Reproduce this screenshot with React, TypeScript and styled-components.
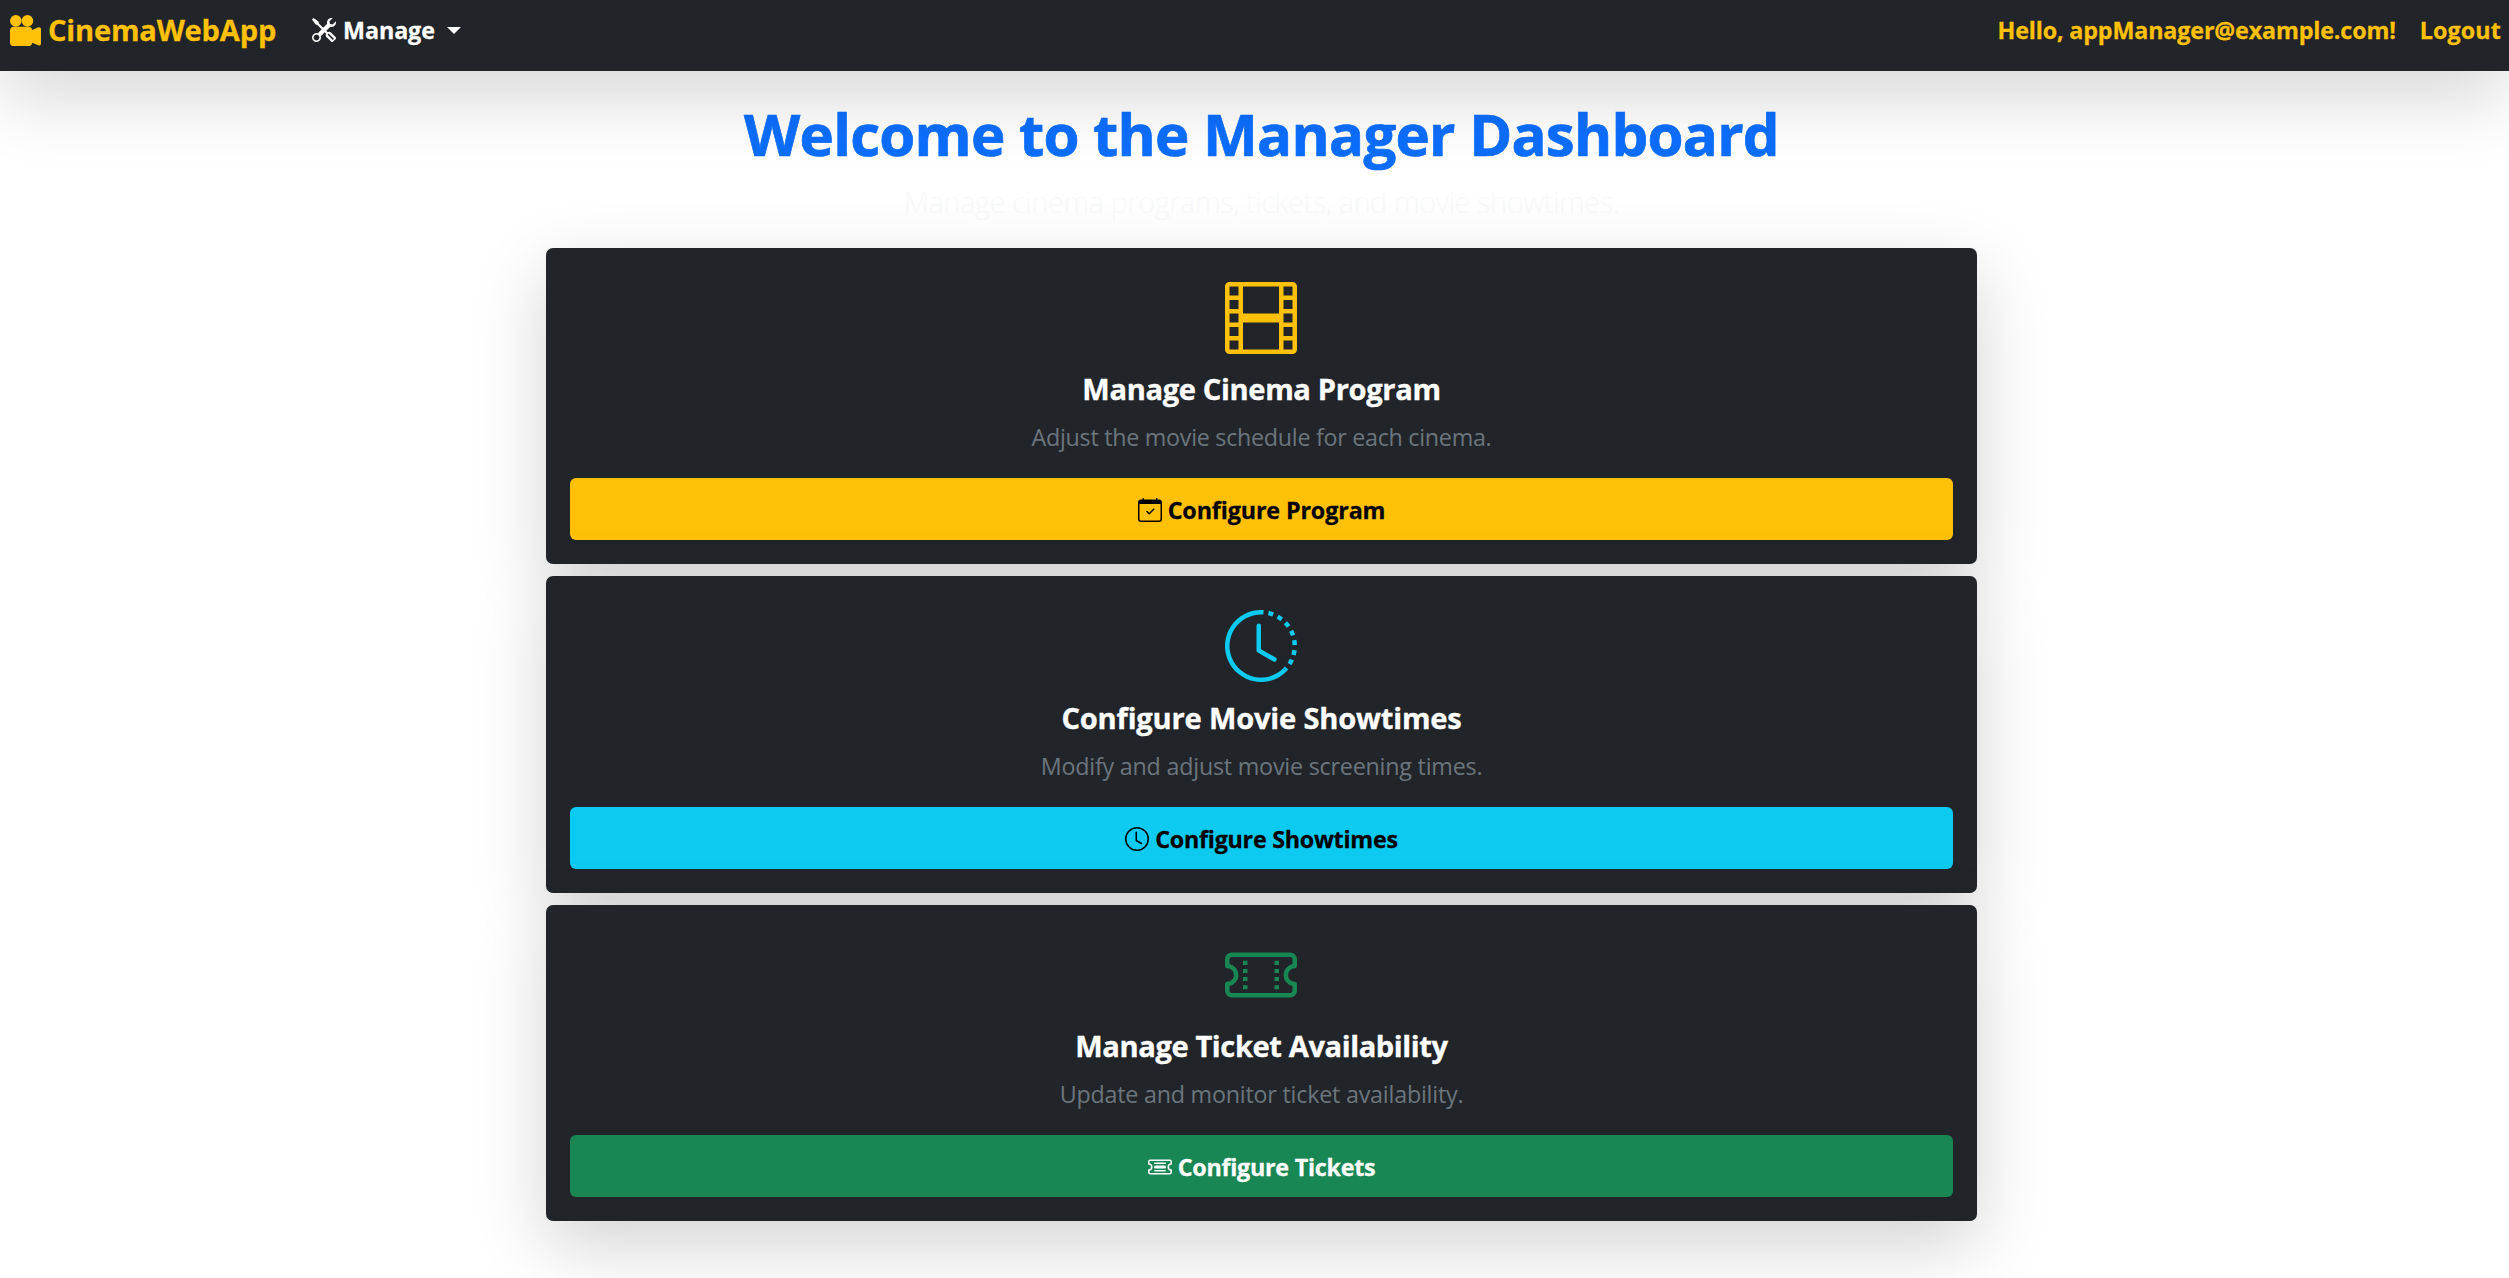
import React from "react";
import styled, { createGlobalStyle } from "styled-components";
import {
  BsCalendarCheck,
  BsCameraReelsFill,
  BsClock,
  BsClockHistory,
  BsFilm,
  BsTicketDetailed,
  BsTicketPerforated,
  BsTools,
} from "react-icons/bs";

const GlobalStyle = createGlobalStyle`
  *, *::before, *::after { box-sizing: border-box; }
  body {
    margin: 0;
    background: #fff;
    color: #212529;
    font-family: "Segoe UI", "Open Sans", "Noto Sans", sans-serif;
    font-size: 23.3px;
    line-height: 36px;
  }
  h1, h2, p { margin: 0; }
`;

const Navbar = styled.nav`
  position: relative;
  z-index: 1;
  display: flex;
  align-items: center;
  height: 71px;
  padding: 0 8px 11px 10px;
  background: #212529;
  box-shadow: 0 24px 72px rgba(0, 0, 0, 0.175);
  font-weight: 700;
  -webkit-text-stroke: 0.012em;
  white-space: nowrap;
`;

const Brand = styled.a`
  display: flex;
  align-items: center;
  gap: 7px;
  color: #ffc107;
  font-size: 29.1px;
  line-height: 45px;
  letter-spacing: -0.2px;
`;

const Dropdown = styled.a`
  display: flex;
  align-items: center;
  margin-left: 36px;
  color: #fff;
  letter-spacing: -0.1px;
`;

const Caret = styled.span`
  margin-left: 12px;
  border-top: 7px solid currentColor;
  border-right: 7px solid transparent;
  border-left: 7px solid transparent;
`;

const Account = styled.div`
  display: flex;
  gap: 24px;
  margin-left: auto;
  color: #ffc107;
`;

const AccountLink = styled.a<{ $track: number }>`
  letter-spacing: ${(p) => p.$track}px;
`;

const Glyph = styled.span<{ $size: number; $gap?: number }>`
  display: flex;
  flex: none;
  margin-right: ${(p) => p.$gap ?? 0}px;
  font-size: ${(p) => p.$size}px;
`;

const Page = styled.main`
  display: flex;
  flex-direction: column;
  align-items: center;
  height: 1207px;
  padding: 27px 0 0 14px;
  overflow: hidden;
  text-align: center;
`;

const Title = styled.h1`
  color: #0d6efd;
  font-size: 58.2px;
  font-weight: 700;
  line-height: 72px;
  letter-spacing: -0.76px;
  -webkit-text-stroke: 0.012em;
`;

const Lead = styled.p`
  margin-top: 9.55px;
  color: #f8f9fa;
  font-size: 29.1px;
  font-weight: 300;
  line-height: 45px;
  letter-spacing: -0.52px;
`;

const CardList = styled.section`
  display: flex;
  flex-direction: column;
  gap: 12px;
  width: 1431px;
  margin-top: 23.2px;
`;

const Card = styled.article`
  position: relative;
  display: flex;
  flex-direction: column;
  align-items: center;
  height: 316.45px;
  padding: 34px 24px 24px;
  border-radius: 7px;
  background: #212529;
  box-shadow: 0 24px 72px rgba(0, 0, 0, 0.175);
`;

const CardIcon = styled.div<{ $color: string }>`
  display: flex;
  margin-right: 1px;
  color: ${(p) => p.$color};
  font-size: 72px;
`;

const CardTitle = styled.h2<{ $track: number }>`
  margin-top: 17.4px;
  color: #fff;
  font-size: 29.1px;
  font-weight: 700;
  line-height: 36px;
  letter-spacing: ${(p) => p.$track}px;
  -webkit-text-stroke: 0.012em;
`;

const CardText = styled.p<{ $track: number }>`
  margin-top: 12px;
  color: #6c757d;
  letter-spacing: ${(p) => p.$track}px;
`;

const Button = styled.a<{ $bg: string; $fg: string; $track: number }>`
  display: flex;
  align-items: center;
  justify-content: center;
  align-self: stretch;
  height: 62px;
  margin-top: auto;
  padding-top: 2px;
  border-radius: 6px;
  background: ${(p) => p.$bg};
  color: ${(p) => p.$fg};
  font-weight: 700;
  letter-spacing: ${(p) => p.$track}px;
  -webkit-text-stroke: 0.012em;
`;

const cards = [
  {
    title: "Manage Cinema Program",
    titleTrack: -0.345,
    text: "Adjust the movie schedule for each cinema.",
    textTrack: -0.283,
    action: "Configure Program",
    actionTrack: -0.13,
    color: "#ffc107",
    fg: "#000",
    Icon: BsFilm,
    ActionIcon: BsCalendarCheck,
  },
  {
    title: "Configure Movie Showtimes",
    titleTrack: -0.185,
    text: "Modify and adjust movie screening times.",
    textTrack: -0.22,
    action: "Configure Showtimes",
    actionTrack: -0.27,
    color: "#0dcaf0",
    fg: "#000",
    Icon: BsClockHistory,
    ActionIcon: BsClock,
  },
  {
    title: "Manage Ticket Availability",
    titleTrack: -0.4,
    text: "Update and monitor ticket availability.",
    textTrack: -0.22,
    action: "Configure Tickets",
    actionTrack: -0.26,
    color: "#198754",
    fg: "#fff",
    Icon: BsTicketPerforated,
    ActionIcon: BsTicketDetailed,
  },
];

export default function App() {
  return (
    <>
      <GlobalStyle />
      <Navbar>
        <Brand>
          <Glyph $size={31}>
            <BsCameraReelsFill />
          </Glyph>
          CinemaWebApp
        </Brand>
        <Dropdown>
          <Glyph $size={24} $gap={7}>
            <BsTools />
          </Glyph>
          Manage
          <Caret />
        </Dropdown>
        <Account>
          <AccountLink $track={-0.15}>Hello, appManager@example.com!</AccountLink>
          <AccountLink $track={0.12}>Logout</AccountLink>
        </Account>
      </Navbar>
      <Page>
        <Title>Welcome to the Manager Dashboard</Title>
        <Lead>Manage cinema programs, tickets, and movie showtimes.</Lead>
        <CardList>
          {cards.map(({ Icon, ActionIcon, ...card }) => (
            <Card key={card.title}>
              <CardIcon $color={card.color}>
                <Icon />
              </CardIcon>
              <CardTitle $track={card.titleTrack}>{card.title}</CardTitle>
              <CardText $track={card.textTrack}>{card.text}</CardText>
              <Button $bg={card.color} $fg={card.fg} $track={card.actionTrack}>
                <Glyph $size={24} $gap={6}>
                  <ActionIcon />
                </Glyph>
                {card.action}
              </Button>
            </Card>
          ))}
        </CardList>
      </Page>
    </>
  );
}
